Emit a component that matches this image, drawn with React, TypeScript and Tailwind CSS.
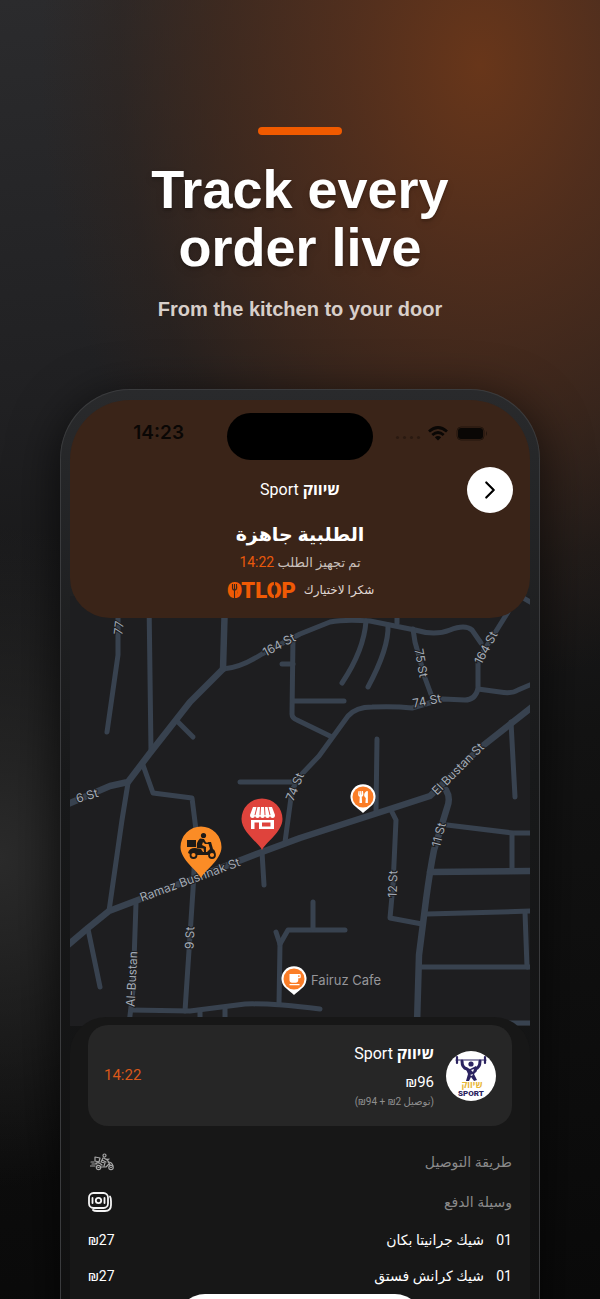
import type { ReactNode } from "react";
import { ChevronRight } from "lucide-react";
import { FaUtensils } from "react-icons/fa";
import { MdLocalCafe } from "react-icons/md";

type OrderItem = {
  id: number;
  qty: string;
  name: string;
  price: string;
};

type StreetLabel = {
  text: string;
  x: number;
  y: number;
  angle: number;
};

const items: OrderItem[] = [
  { id: 1, qty: "01", name: "شيك جرانيتا بكان", price: "27" },
  { id: 2, qty: "01", name: "شيك كرانش فستق", price: "27" },
];

const mainRoads = [
  "M223 669 L190 702 L150 753 L128 782 L110 786 L68 804",
  "M225 600 L223 669",
  "M68 945 L88 928 L109 911 L138 900 L262 852 L300 838 L390 809 L430 796 L480 748 L532 707",
  "M446 790 Q451 798 447 808 L434 850 Q430 870 426 900 L419 955 L417 1024",
  "M430 872 L532 871",
];

const sideRoads = [
  "M118 600 V655 L107 732",
  "M149 600 L151 752",
  "M223 669 Q240 668 262 654 L300 634 L330 622 Q345 619 370 621 L415 630 Q435 636 450 630 Q465 624 472 630 L481 643",
  "M178 722 L193 737",
  "M143 765 L153 793 L192 798 L196 830 L193 890 L185 1011",
  "M128 783 L122 820 L109 911",
  "M293 637 L292 714 Q292 718 297 720 L332 737",
  "M282 664 H293",
  "M293 701 H344",
  "M240 782 H296",
  "M285 842 L292 790 L300 776 L319 756 L348 716 Q356 707 372 707 Q395 706 412 708 L443 699 L465 700 Q475 700 478 689 L478 660 L508 612",
  "M478 689 L500 692 Q512 694 518 690 L532 684",
  "M413 629 L415 642 L425 678 L432 697",
  "M366 621 Q364 650 342 683",
  "M388 625 Q389 648 368 687",
  "M397 623 V612",
  "M520 596 L532 603",
  "M511 722 L515 797",
  "M377 739 L376 812",
  "M391 810 L396 820 L393 885 L390 918 L422 924",
  "M447 825 L513 833 H532",
  "M512 834 V871",
  "M427 914 L532 911",
  "M525 912 L527 967",
  "M421 967 H532",
  "M508 1023 H532",
  "M88 929 L100 987",
  "M136 903 L133 990 L129 1024",
  "M131 1010 L190 1011 L245 1004 Q270 1003 320 1009",
  "M200 1011 V1024",
  "M225 1008 V1024",
  "M279 1004 L280 944 L276 932",
  "M280 944 L288 930 L345 930",
  "M313 902 V929",
  "M262 852 L264 885",
];

const streets: StreetLabel[] = [
  { text: "77", x: 119, y: 628, angle: -83 },
  { text: "164 St", x: 279, y: 645, angle: -28 },
  { text: "75 St", x: 421, y: 663, angle: 80 },
  { text: "164 St", x: 486, y: 648, angle: -62 },
  { text: "74 St", x: 427, y: 701, angle: -11 },
  { text: "El Bustan St", x: 458, y: 769, angle: -45 },
  { text: "6 St", x: 87, y: 796, angle: -17 },
  { text: "74 St", x: 295, y: 787, angle: -68 },
  { text: "11 St", x: 439, y: 835, angle: -75 },
  { text: "12 St", x: 393, y: 884, angle: -88 },
  { text: "Ramaz Bushnak St", x: 190, y: 880, angle: -20 },
  { text: "9 St", x: 190, y: 938, angle: -88 },
  { text: "Al-Bustan", x: 132, y: 979, angle: -87 },
];

const MapPin = ({ x, y, color, children }: { x: number; y: number; color: string; children: ReactNode }) => (
  <g transform={`translate(${x} ${y})`}>
    <path d="M0 31 C-3 24 -20.500 13 -20.500 0 A20.500 20.500 0 0 1 20.500 0 C20.500 13 3 24 0 31Z" fill={color} />
    {children}
  </g>
);

const PlacePin = ({ x, y, children }: { x: number; y: number; children: ReactNode }) => (
  <g transform={`translate(${x} ${y})`}>
    <path d="M0 16 C-2 14 -5 12 -7 10 A12.5 12.5 0 1 1 7 10 C5 12 2 14 0 16Z" fill="#fff" />
    <circle r="10.5" fill="#fb7d27" />
    {children}
  </g>
);

const OrderMap = () => (
  <svg
    viewBox="70 596 460 430"
    className="-mt-[22px] block w-full bg-[#1e1e20] font-[Inter,sans-serif]"
    direction="ltr"
    role="img"
  >
    <g fill="none" stroke="#38424f" strokeLinecap="round" strokeLinejoin="round">
      <g strokeWidth="5">
        {sideRoads.map((d) => (
          <path key={d} d={d} />
        ))}
      </g>
      <g strokeWidth="6.5">
        {mainRoads.map((d) => (
          <path key={d} d={d} />
        ))}
      </g>
    </g>
    <g fill="#a3abb6" stroke="#1e1e20" strokeWidth="2" paintOrder="stroke" fontSize="12" textAnchor="middle">
      {streets.map((street) => (
        <text
          key={`${street.text}-${street.x}`}
          transform={`translate(${street.x} ${street.y}) rotate(${street.angle})`}
          dy="4"
          className="[direction:ltr]"
        >
          {street.text}
        </text>
      ))}
    </g>
    <MapPin x={262} y={819} color="#df433c">
      <g fill="#fff">
        <path d="M-9 -12 H10 L13 -4 H-12Z" />
        <path d="M-12 -4 a2.5 3 0 0 0 5 0 a2.5 3 0 0 0 5 0 a2.5 3 0 0 0 5 0 a2.5 3 0 0 0 5 0 a2.5 3 0 0 0 5 0Z" />
        <path fillRule="evenodd" d="M-11 1 H12 V10 H-3 V3.500 H-7.500 V10 H-11Z M0 3.500 V7.500 H8.500 V3.500Z" />
      </g>
      <path d="M-5 -12 L-7 -4 M-1.500 -12 L-2 -4 M2.500 -12 L3 -4 M6 -12 L8 -4" stroke="#df433c" strokeWidth="1" />
    </MapPin>
    <MapPin x={201} y={847} color="#fb8c26">
      <g fill="#1e1a17">
        <rect x="-14" y="-7" width="9" height="7" />
        <circle cx="2.500" cy="-11.500" r="2.600" />
        <path d="M-1 -8.500 L3 -8 L5 -4.500 L9 -4.500 V-3 L4 -3 L2 -5 L1 -2 L5 0 L5 5 H3 L2.500 1.500 L-4 1 Q-5 -5 -1 -8.500Z" />
        <path d="M-13 6 Q-12 1 -6 1 L0 2 L2 5 L6 5 L9 2 L7 -5 H10 L12 2 Q15 4 14 7 H10 L7 8 H-9Z" />
      </g>
      <g fill="#fb8c26" stroke="#1e1a17" strokeWidth="1.800">
        <circle cx="-7.500" cy="8" r="3" />
        <circle cx="11" cy="8" r="3" />
      </g>
    </MapPin>
    <PlacePin x={363} y={797}>
      <FaUtensils x={-6} y={-6} size={12} color="#fff" />
    </PlacePin>
    <PlacePin x={294} y={979}>
      <MdLocalCafe x={-7} y={-7} size={15} color="#fff" />
    </PlacePin>
    <text x="311" y="985" fontSize="13" fill="#96969a" className="[direction:ltr]">
      Fairuz Cafe
    </text>
  </svg>
);

const OtlopLogo = () => (
  <svg width="74" height="28" viewBox="0 -4 74 28" role="img" className="shrink-0 overflow-visible">
    <text x="1" y="18" fontSize="22" fontWeight="900" fill="#f05a05" className="font-[Roboto,sans-serif] [direction:ltr]">
      OTLOP
    </text>
    <ellipse cx="8.500" cy="10" rx="3.500" ry="6" fill="#f05a05" />
    <path d="M6.500 4 V8 Q6.500 10 8.500 10 Q10.500 10 10.500 8 V4 M8.500 4 V18" fill="none" stroke="#3a2418" strokeWidth="1.100" />
    <path d="M48.500 1 V5 M48.500 15 V19" stroke="#3a2418" strokeWidth="1.200" />
  </svg>
);

const SportLogo = () => (
  <svg width="50" height="50" viewBox="0 0 50 50" role="img" className="shrink-0">
    <circle cx="25" cy="25" r="25" fill="#fff" />
    <g fill="none" stroke="#2b2360" strokeLinecap="round">
      <path d="M10 9 H40" strokeWidth="1.200" />
      <path d="M11 6 V12 M39 6 V12" strokeWidth="2.200" />
      <path d="M16 10 Q16 17 21 18 M34 10 Q34 17 29 18" strokeWidth="3" />
    </g>
    <path d="M19 16 L24 18 L30 15 L31 20 L28 23 L31 29 L28 30 L25 26 L23 30 H20 L22 23Z" fill="#2b2360" />
    <circle cx="25" cy="13" r="2.600" fill="#2b2360" />
    <path d="M25 19 L28 18 L27 21Z M24 24 L27 23 L26 25Z" fill="#fff" />
    <text x="26" y="37" textAnchor="middle" fontSize="9" fontWeight="700" fill="#e8b636" className="font-[Open_Sans,sans-serif]">
      שיווק
    </text>
    <text x="25" y="45" textAnchor="middle" fontSize="8" fontWeight="900" fill="#2b2360" className="font-[Roboto,sans-serif]">
      SPORT
    </text>
  </svg>
);

const CashIcon = () => (
  <svg width="24" height="20" viewBox="0 0 24 20" fill="none" stroke="#f4f4f4" strokeWidth="1.800" strokeLinecap="round">
    <rect x="1" y="1" width="19" height="15" rx="4.500" />
    <path d="M22 4.500 Q23 6 23 9 V13 Q23 19 17 19 H9 Q6 19 5 18" />
    <circle cx="10.500" cy="8.500" r="2.700" />
    <path d="M4.500 6 V11 M16.500 6 V11" />
  </svg>
);

const CourierIcon = () => (
  <svg width="24" height="18" viewBox="0 0 24 18" fill="none" stroke="#a6a6a6" strokeWidth="1.200" strokeLinecap="round" strokeLinejoin="round">
    <circle cx="14.500" cy="2.500" r="1.500" />
    <path d="M13 5 L11 9 L15 10 L14 13 M14 5 L17 7 L19 6 M17 6 L20 12 M10 14 H16 L19 11 M12 7 L16 9" />
    <path d="M5 4 L10 5 L9 9 L5 8Z M6 10 Q9 9 12 12 M1 9 H4 M2 11 H7 M0 13 H5 M18 9 Q22 9 23 13" />
    <circle cx="8.500" cy="14.500" r="2.200" />
    <circle cx="21" cy="14.500" r="2.200" />
    <path d="M8 14.500 H9 M20.500 14.500 H21.500" />
  </svg>
);

const StatusBar = () => (
  <div className="grid grid-cols-3 items-start pt-[13px] text-[#0a0705]" dir="ltr">
    <span className="pl-6 text-center font-[Inter,sans-serif] text-[19px] leading-10 font-semibold">14:23</span>
    <div className="mx-auto h-[47px] w-[146px] rounded-full bg-black" />
    <div className="flex h-10 items-center justify-end gap-2 pr-[42px]">
      <div className="mt-2 flex gap-1">
        <i className="size-[3px] rounded-full bg-[#2a1a11]" />
        <i className="size-[3px] rounded-full bg-[#2a1a11]" />
        <i className="size-[3px] rounded-full bg-[#2a1a11]" />
        <i className="size-[3px] rounded-full bg-[#2a1a11]" />
      </div>
      <svg width="20" height="15" viewBox="0 0 20 15" fill="none" stroke="currentColor" strokeWidth="2.800">
        <path d="M1 5.500 Q10 -2.500 19 5.500" />
        <path d="M4.300 9 Q10 4 15.700 9" />
        <path d="M10 14.500 L6.800 11.300 Q10 8.800 13.200 11.300Z" fill="currentColor" stroke="none" />
      </svg>
      <svg width="32" height="15" viewBox="0 0 32 15">
        <rect x="1" y="1" width="27" height="13" rx="4" fill="none" stroke="#23150d" />
        <rect x="2" y="2" width="25" height="11" rx="3" fill="currentColor" />
        <path d="M30 5 Q32 7.500 30 10Z" fill="#23150d" />
      </svg>
    </div>
  </div>
);

const StoreName = () => (
  <>
    <b>שיווק</b> Sport
  </>
);

const OrderHeader = () => (
  <header className="relative z-10 rounded-b-[40px] bg-[#3a2418] pb-[15px] text-center text-white">
    <StatusBar />
    <div className="mt-[7px] grid grid-cols-[46px_1fr_46px] items-center px-[17px]">
      <button
        type="button"
        aria-label="رجوع"
        className="flex size-[46px] items-center justify-center rounded-full bg-white text-black"
      >
        <ChevronRight size={30} strokeWidth={1.75} />
      </button>
      <p className="text-base">
        <StoreName />
      </p>
    </div>
    <h2 className="mt-2 text-[19px] leading-7 font-bold">الطلبية جاهزة</h2>
    <p className="text-[13px] leading-7 text-[#c9c0bb]">
      تم تجهيز الطلب <span className="text-sm text-[#e8590c]">14:22</span>
    </p>
    <div className="flex h-[26px] items-center justify-center gap-1 text-xs text-[#e0d8d3]">
      <span>شكرا لاختيارك</span>
      <OtlopLogo />
    </div>
  </header>
);

const OrderSheet = () => (
  <section className="relative -mt-[9px] rounded-t-[36px] bg-[#171717] px-[18px] pt-2 text-white">
    <div className="flex h-[101px] items-center gap-3 rounded-[20px] bg-[#262626] px-4">
      <SportLogo />
      <div className="flex-1 pb-1">
        <p className="text-base leading-7">
          <StoreName />
        </p>
        <p className="text-right text-[15px] leading-7" dir="ltr">
          ₪96
        </p>
        <p className="text-[10px] leading-3 text-[#8f8f8f]">(توصيل 2₪ + 94₪)</p>
      </div>
      <time className="text-[15px] text-[#d9581a]">14:22</time>
    </div>
    <dl className="mt-4 text-sm text-[#8a8a8a]">
      <div className="flex h-10 items-center justify-between">
        <dt>طريقة التوصيل</dt>
        <dd className="px-[2px]">
          <CourierIcon />
        </dd>
      </div>
      <div className="flex h-10 items-center justify-between">
        <dt>وسيلة الدفع</dt>
        <dd>
          <CashIcon />
        </dd>
      </div>
    </dl>
    <ul className="text-sm">
      {items.map((item) => (
        <li key={item.id} className="flex h-9 items-center">
          <span className="w-7">{item.qty}</span>
          <span className="flex-1">{item.name}</span>
          <span dir="ltr">₪{item.price}</span>
        </li>
      ))}
    </ul>
    <button type="button" aria-label="تم" className="mx-auto block h-14 w-[58%] rounded-[28px] bg-white" />
  </section>
);

const App = () => {
  return (
    <main className="relative flex h-screen flex-col items-center overflow-hidden bg-[radial-gradient(ellipse_440px_620px_at_80%_5%,#68361a_0%,#5b301acc_30%,#46291aaa_60%,#35221855_82%,transparent_100%),radial-gradient(ellipse_260px_330px_at_0%_66%,#2b2b2b_0%,transparent_100%),linear-gradient(175deg,#2b2b2d_0%,#202022_30%,#131313_58%,#0a0a0a_100%)] font-[Liberation_Sans,sans-serif]">
      <div className="mt-[127px] h-2 w-[84px] shrink-0 rounded-full bg-[#f05a00]" />
      <h1 className="mt-[25px] text-center text-[54px] leading-[58px] font-bold text-white text-shadow-lg">
        Track every
        <br />
        order live
      </h1>
      <p className="mt-[19px] text-center text-[20px] leading-7 font-bold text-[#d8cfca]">
        From the kitchen to your door
      </p>
      <div className="mt-[66px] w-4/5 shrink-0 rounded-t-[70px] border border-b-0 border-[#3a3b3d] bg-linear-to-b from-[#292a2c] via-[#18191a] via-40% to-[#101010] px-[9px] pt-[10px] shadow-[0_10px_50px_#000000aa]">
        <div
          dir="rtl"
          className="overflow-hidden rounded-t-[60px] font-[Roboto,Open_Sans,DejaVu_Sans,sans-serif]"
        >
          <OrderHeader />
          <OrderMap />
          <OrderSheet />
        </div>
      </div>
    </main>
  );
};

export default App;
